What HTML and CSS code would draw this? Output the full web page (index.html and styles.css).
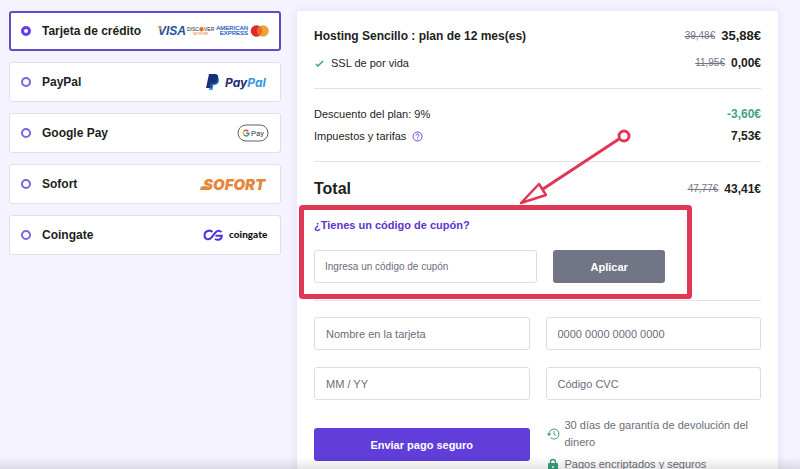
FILE: index.html
```html
<!DOCTYPE html>
<html lang="es">
<head>
    <meta charset="UTF-8">
    <meta name="viewport" content="width=device-width, initial-scale=1.0">
    <title>Pago</title>
    <link rel="stylesheet" href="styles.css">
</head>
<body>
    <main class="checkout">
        <div class="methods">
            <label class="method selected">
                <input type="radio" name="method" checked>
                <span>Tarjeta de crédito</span>
                <svg class="logo" width="112" height="16" viewBox="0 0 112 16">
                    <text class="visa" x="1" y="12" font-size="12">VISA</text>
                    <path d="M0 3.500h4l1 4z" fill="#e0a94a"/>
                    <g class="discover">
                        <text x="30" y="8" font-size="5">DISC</text>
                        <circle cx="44.500" cy="6.200" r="2.200" fill="#e5702a"/>
                        <text x="47" y="8" font-size="5">VER</text>
                        <text class="network" x="36" y="12" font-size="3">NETWORK</text>
                    </g>
                    <g class="amex">
                        <text x="91" y="7" font-size="6">AMERICAN</text>
                        <text x="91" y="12" font-size="6">EXPRESS</text>
                    </g>
                    <circle cx="99.500" cy="8" r="5.800" fill="#dd2b2b"/>
                    <circle cx="106" cy="8" r="5.800" fill="#eda03c"/>
                    <path d="M102.700 3.200a5.800 5.800 0 0 1 0 9.600a5.800 5.800 0 0 1 0-9.600z" fill="#ec6a28"/>
                </svg>
            </label>
            <label class="method">
                <input type="radio" name="method">
                <span>PayPal</span>
                <svg class="logo" width="63" height="18" viewBox="0 0 63 18">
                    <path d="M5 4h6c2.500 1 2.600 3.500 1.600 5.500c-1 2-3 2.500-5 2.500l-1 5H3z" fill="#3b96dc"/>
                    <path d="M3 1h5.500c3 0 4.300 1.800 3.600 4.500c-.6 2.800-2.600 4.200-5.300 4.200H5L4 15H0z" fill="#17307c"/>
                    <path d="M5.500 9.700h1.800c2.500 0 4-1.200 4.700-3.700c.4 3-1.500 5-4.300 5H6.300L5.500 15H4.400z" fill="#202a66"/>
                    <text class="paypal" x="19" y="14" font-size="12">Pay<tspan fill="#3b96dc">Pal</tspan></text>
                </svg>
            </label>
            <label class="method">
                <input type="radio" name="method">
                <span>Google Pay</span>
                <svg class="logo" width="32" height="18" viewBox="0 0 32 18">
                    <rect x="1" y="1" width="30" height="16" rx="8" fill="#fff" stroke="#5f6368"/>
                    <g fill="none" stroke-width="1.500">
                        <path d="M11.200 7.200A2.900 2.900 0 0 0 6.700 7.400" stroke="#ea4335"/>
                        <path d="M6.700 7.400a2.900 2.900 0 0 0 0 3.200" stroke="#fbbc04"/>
                        <path d="M6.700 10.600a2.900 2.900 0 0 0 4.300.600" stroke="#34a853"/>
                        <path d="M11 11.200a2.900 2.900 0 0 0 .9-2H9" stroke="#4285f4"/>
                    </g>
                    <text class="gpay" x="14" y="12" font-size="8">Pay</text>
                </svg>
            </label>
            <label class="method">
                <input type="radio" name="method">
                <span>Sofort</span>
                <svg class="logo" width="70" height="18" viewBox="0 0 70 18">
                    <path d="M2 11.500h8l-1 3.500H1z" fill="#e5873a"/>
                    <text class="sofort" x="4" y="15" font-size="15">SOFORT</text>
                </svg>
            </label>
            <label class="method">
                <input type="radio" name="method">
                <span>Coingate</span>
                <svg class="logo" width="66" height="16" viewBox="0 0 66 16">
                    <path d="M9.500 5C7 2.500 1.500 3.500 1.500 8.500c0 4 4.500 5 7 2L12.500 5.500c2-2.200 4.500-1.800 6-.5M12.500 8.700h6.300c0 4-4 5-6.800 3.300" fill="none" stroke="#5131dc" stroke-width="2"/>
                    <text class="coingate" x="26" y="11" font-size="10">coingate</text>
                </svg>
            </label>
        </div>

        <form class="panel">
            <section class="plan">
                <div class="row title">
                    <h2>Hosting Sencillo : plan de 12 mes(es)</h2>
                    <span class="price big"><del>39,48€</del><b>35,88€</b></span>
                </div>
                <div class="row ssl">
                    <span class="feature">
                        <svg width="11" height="11" viewBox="0 0 11 11"><path d="M2 6l2 2 5-5" fill="none" stroke="#3c9f7d" stroke-width="1.500"/></svg>
                        SSL de por vida
                    </span>
                    <span class="price"><del>11,95€</del><b>0,00€</b></span>
                </div>
            </section>

            <section class="fees">
                <div class="row">
                    <span>Descuento del plan: 9%</span>
                    <span class="price discount"><b>-3,60€</b></span>
                </div>
                <div class="row">
                    <span class="taxes">
                        Impuestos y tarifas
                        <svg width="11" height="11" viewBox="0 0 11 11" fill="none" stroke="#6747dc">
                            <circle cx="5.500" cy="5.500" r="4.500"/>
                            <path d="M4 4.500c0-2 3-2 3 0c0 1-1.500 1-1.500 2.200M5.500 7.500v1"/>
                        </svg>
                    </span>
                    <span class="price"><b>7,53€</b></span>
                </div>
            </section>

            <section class="totals">
                <div class="row total">
                    <h1>Total</h1>
                    <span class="price"><del>47,77€</del><b>43,41€</b></span>
                </div>
                <div class="coupon">
                    <label for="coupon">¿Tienes un código de cupón?</label>
                    <div class="coupon-row">
                        <input type="text" id="coupon" placeholder="Ingresa un código de cupón">
                        <button type="button" class="apply">Aplicar</button>
                    </div>
                    <svg class="marker" width="400" height="180" viewBox="0 0 400 180">
                        <rect x="4.500" y="84.500" width="388" height="89" rx="1" stroke-width="5"/>
                        <circle cx="327" cy="13" r="5" stroke-width="3"/>
                        <path d="M322 16L246 66" stroke-width="3"/>
                        <path d="M224 80l18-19 7 11z" stroke-width="2.500" fill="#fff"/>
                    </svg>
                </div>
            </section>

            <section class="card-form">
                <input type="text" placeholder="Nombre en la tarjeta" aria-label="Nombre en la tarjeta">
                <input type="text" placeholder="0000 0000 0000 0000" aria-label="Número de tarjeta">
                <input type="text" placeholder="MM / YY" aria-label="Caducidad">
                <input type="text" placeholder="Código CVC" aria-label="Código CVC">
                <button type="button" class="pay">Enviar pago seguro</button>
                <div class="notes">
                    <p>
                        <svg width="14" height="14" viewBox="0 0 14 14" fill="none" stroke="#3c9f7d">
                            <path d="M3 7a5 5 0 1 1 1.500 3.600M8 4v3.200l2 1.300"/>
                            <path d="M.500 6.500h5L3 9z" fill="#3c9f7d" stroke="none"/>
                        </svg>
                        <span>30 días de garantía de devolución del dinero</span>
                    </p>
                    <p>
                        <svg width="14" height="14" viewBox="0 0 14 14">
                            <path d="M4.500 6V4a2.500 2.500 0 0 1 5 0v2" fill="none" stroke="#3c9f7d" stroke-width="1.300"/>
                            <rect x="2" y="5" width="10" height="8" rx="1" fill="#3c9f7d"/>
                            <circle cx="7" cy="9" r="1" fill="#fff"/>
                        </svg>
                        <span>Pagos encriptados y seguros</span>
                    </p>
                </div>
            </section>
        </form>
    </main>
    <div class="fade"></div>
</body>
</html>
```

FILE: styles.css
```css
* {
    box-sizing: border-box;
}
body {
    margin: 0;
    height: 100vh;
    overflow: hidden;
    background-color: #f4f3ff;
    color: #1d1e20;
    font-family: "Liberation Sans", Arial, sans-serif;
    font-size: 11px;
    line-height: 14px;
}
h1, h2, p {
    margin: 0;
}
.checkout {
    display: grid;
    grid-template-columns: 272px 1fr;
    gap: 16px;
    align-items: start;
    padding: 11px 22px 0 9px;
}

/* payment methods */
.methods {
    display: grid;
    gap: 11px;
}
.method {
    display: flex;
    align-items: center;
    gap: 11px;
    height: 40px;
    padding: 0 11px;
    border: 1px solid #e0e0ec;
    border-radius: 3px;
    background-color: #fff;
    font-size: 12px;
    font-weight: bold;
    cursor: pointer;
}
.method.selected {
    padding: 0 10px;
    border: 2px solid #6747c7;
}
.method input {
    appearance: none;
    width: 10px;
    height: 10px;
    margin: 0;
    border: 2px solid #7f62de;
    border-radius: 50%;
}
.method input:checked {
    border: 3px solid #673de6;
}
.logo {
    margin-left: auto;
}
.visa {
    font-family: "Liberation Sans", sans-serif;
    font-weight: bold;
    font-style: italic;
    fill: #28509a;
}
.discover {
    font-family: "Liberation Sans", sans-serif;
    font-weight: normal;
    fill: #26262c;
}
.network {
    fill: #e5702a;
}
.amex {
    font-family: "Liberation Sans", sans-serif;
    font-weight: normal;
    text-anchor: end;
    fill: #2563c4;
    stroke: #2563c4;
    stroke-width: 0.2;
}
.paypal {
    font-family: Inter, sans-serif;
    font-weight: 700;
    font-style: italic;
    fill: #1c2f78;
}
.gpay {
    font-family: Roboto, sans-serif;
    font-weight: normal;
    fill: #3c4043;
}
.sofort {
    font-family: Inter, sans-serif;
    font-weight: 900;
    font-style: italic;
    fill: #e5873a;
}
.coingate {
    font-family: Lato, sans-serif;
    font-weight: 900;
    fill: #131318;
}

/* order summary */
.panel {
    padding: 17px;
    border-radius: 3px;
    background-color: #fff;
    box-shadow: 0 0 10px rgba(60, 40, 160, 0.1);
}
.plan, .fees, .totals {
    border-bottom: 1px solid #e2e2e6;
}
.row {
    display: flex;
    justify-content: space-between;
    align-items: center;
}
.plan {
    padding-bottom: 18px;
}
.title h2 {
    font-size: 12px;
    line-height: 16px;
}
.ssl {
    margin-top: 12px;
}
.feature, .taxes {
    display: flex;
    align-items: center;
    gap: 6px;
}
.price {
    display: flex;
    align-items: center;
    gap: 6px;
    font-size: 12px;
}
.price.big {
    font-size: 13px;
}
.price del {
    color: #727586;
    font-size: 10px;
}
.discount {
    color: #3fa682;
}
.fees {
    display: grid;
    gap: 8px;
    padding: 18px 0;
}
.totals {
    padding: 17px 0;
}
.total h1 {
    font-size: 16px;
    line-height: 20px;
}

/* coupon */
.coupon {
    position: relative;
    padding-top: 19px;
}
.coupon label {
    display: block;
    color: #5c34cd;
    font-weight: bold;
}
.coupon-row {
    display: grid;
    grid-template-columns: 2fr 1fr;
    gap: 16px;
    margin: 18px 96px 0 0;
}
.panel input {
    width: 100%;
    height: 33px;
    padding: 0 11px;
    border: 1px solid #dcdce2;
    border-radius: 3px;
    font: inherit;
}
.panel input::placeholder {
    color: #6b6d7c;
}
.panel .coupon input {
    padding: 0 10px;
    font-size: 10px;
}
button {
    height: 33px;
    border: none;
    border-radius: 3px;
    color: #fff;
    font: inherit;
    font-weight: bold;
    cursor: pointer;
}
.apply {
    background-color: #727586;
}
.marker {
    position: absolute;
    left: -17px;
    top: -76px;
    fill: none;
    stroke: #e03854;
    stroke-linejoin: round;
    pointer-events: none;
}

/* card form */
.card-form {
    display: grid;
    grid-template-columns: 1fr 1fr;
    gap: 17px 16px;
    padding-top: 16px;
}
.pay {
    margin-top: 11px;
    background-color: #613dda;
}
.notes {
    display: grid;
    gap: 5px;
    color: #6b6d7c;
    line-height: 17px;
}
.notes p {
    display: flex;
    align-items: center;
    gap: 5px;
}
.notes svg {
    flex: none;
}
.fade {
    position: fixed;
    left: 0;
    right: 0;
    bottom: 0;
    height: 12px;
    background: linear-gradient(rgba(0, 0, 0, 0), rgba(0, 0, 0, 0.1));
    pointer-events: none;
}
```
